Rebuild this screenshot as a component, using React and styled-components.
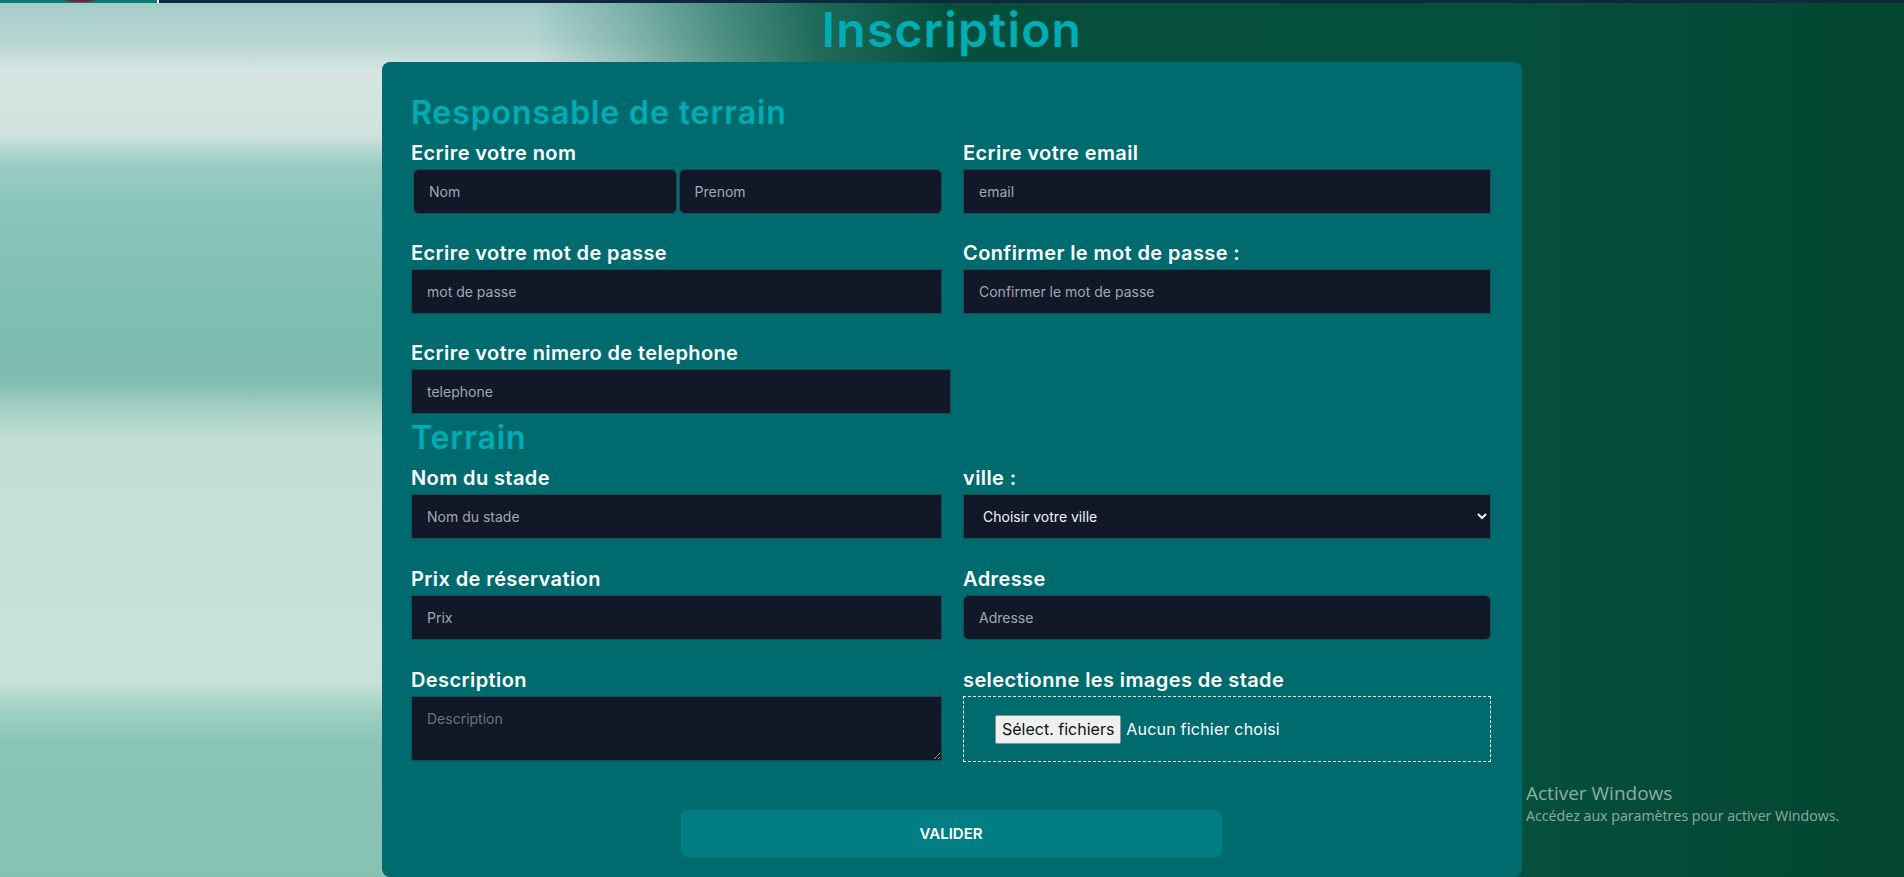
import React from "react";
import styled, { createGlobalStyle } from "styled-components";

const GlobalStyle = createGlobalStyle`
  html, body { margin: 0; padding: 0; }
  body {
    font-family: "Inter", "Liberation Sans", sans-serif;
    overflow: hidden;
  }
  * { box-sizing: border-box; }
`;

const Page = styled.div`
  position: relative;
  height: 877px;
  overflow: hidden;
  display: flex;
  flex-direction: column;
  background:
    linear-gradient(90deg,
      rgba(3, 72, 54, 0) 0%,
      rgba(3, 72, 54, 0) 28%,
      rgba(20, 110, 90, 0.3) 33%,
      rgba(12, 100, 80, 0.62) 38%,
      rgba(6, 88, 68, 0.86) 43%,
      #044e3b 50%,
      #054f3d 80%,
      #03462f 100%),
    linear-gradient(180deg,
      #a3ccc7 0px,
      #b5d5d1 40px,
      #d6e5e2 72px,
      #cfe2de 135px,
      #9ccbc3 165px,
      #8bc5bb 200px,
      #7fbfb2 300px,
      #7ebdb0 380px,
      #a8d2c6 412px,
      #c3dfd6 440px,
      #c8e2d9 680px,
      #9fcfc2 712px,
      #8ac4b5 742px,
      #86c1b2 877px);
`;

const TopBar = styled.div`
  display: flex;
  height: 3px;
  flex: none;
  overflow: hidden;
`;

const LogoZone = styled.div`
  width: 157px;
  background: #0b7b78;
  display: flex;
`;

const BarDivider = styled.div`
  width: 2px;
  background: #ffffff;
`;

const BarRest = styled.div`
  flex: 1;
  background: #10283b;
`;

const Title = styled.h1`
  margin: 3px 0 8px;
  font-size: 48px;
  line-height: 48px;
  font-weight: 600;
  text-align: center;
  color: #00adb5;
  letter-spacing: 1.2px;
`;

const Card = styled.div`
  width: 1140px;
  margin: 0 auto;
  background: #006b6f;
  border-radius: 8px;
  padding: 31px 31px 20px 29px;
`;

const SectionTitle = styled.h2`
  margin: 0 0 4px;
  font-size: 32px;
  line-height: 40px;
  font-weight: 600;
  color: #00adb5;
  letter-spacing: 0.9px;
`;

const FieldGrid = styled.div`
  display: grid;
  grid-template-columns: 531px 528px;
  column-gap: 21px;
  row-gap: ${(p) => p.$rowGap || "23px"};
  margin-bottom: 4px;
`;

const Field = styled.div`
  display: flex;
  flex-direction: column;
  grid-column: ${(p) => (p.$full ? "1 / -1" : "auto")};
`;

const Label = styled.label`
  font-size: 20px;
  line-height: 32px;
  font-weight: 600;
  color: #ffffff;
  white-space: nowrap;
  letter-spacing: 0.4px;
`;

const NameRow = styled.div`
  display: flex;
  gap: 2px;
  padding-left: 2px;
`;

const TextInput = styled.input`
  width: ${(p) => p.$width || "100%"};
  min-width: 0;
  flex: ${(p) => (p.$grow ? "1" : "none")};
  height: 45px;
  padding: 0 15px;
  background: #111827;
  border: 1px solid #1f4a55;
  border-radius: ${(p) => (p.$rounded ? "6px" : "0")};
  color: #e5e7eb;
  font-family: inherit;
  font-size: 14px;
  outline: none;
  &::placeholder { color: #a3a8b1; }
`;

const Select = styled.select`
  width: 100%;
  height: 45px;
  padding: 0 11px 0 15px;
  background: #111827;
  border: 1px solid #1f4a55;
  border-radius: 0;
  color: #f3f4f6;
  font-family: inherit;
  font-size: 14px;
  outline: none;
`;

const TextArea = styled.textarea`
  width: 100%;
  height: 65px;
  padding: 13px 15px;
  background: #111827;
  border: 1px solid #1f4a55;
  color: #e5e7eb;
  font-family: inherit;
  font-size: 14px;
  outline: none;
  &::placeholder { color: #6b7280; }
`;

const FileBox = styled.div`
  height: 66px;
  border: 1px dashed #ffffff;
  display: flex;
  align-items: center;
  gap: 5px;
  padding-left: 31px;
`;

const FileButton = styled.button`
  height: 29px;
  padding: 0 6px;
  background: #efefef;
  border: 1px solid #8f8f8f;
  border-radius: 2px;
  color: #111;
  font-family: inherit;
  font-size: 16px;
  font-weight: 400;
`;

const FileStatus = styled.span`
  color: #ffffff;
  font-size: 16px;
  letter-spacing: 0.2px;
`;

const SubmitButton = styled.button`
  display: block;
  width: 541px;
  height: 47px;
  margin: 48px auto 0;
  background: #007e84;
  border: none;
  border-radius: 6px;
  color: #ffffff;
  font-family: inherit;
  font-size: 15px;
  font-weight: 600;
`;

const Watermark = styled.div`
  position: absolute;
  left: 1526px;
  top: 780px;
  color: rgba(255, 255, 255, 0.55);
  font-family: "Open Sans", "Noto Sans", sans-serif;
`;

const WatermarkTitle = styled.div`
  font-size: 19px;
  line-height: 26px;
`;

const WatermarkText = styled.div`
  font-size: 14.2px;
  line-height: 20px;
`;

export default function App() {
  return (
    <Page>
      <GlobalStyle />
      <TopBar>
        <LogoZone>
          <svg width="157" height="3" viewBox="0 0 157 3">
            <ellipse cx="80" cy="-8" rx="26" ry="10" fill="#8a1526" />
          </svg>
        </LogoZone>
        <BarDivider />
        <BarRest />
      </TopBar>

      <Title>Inscription</Title>

      <Card>
        <SectionTitle>Responsable de terrain</SectionTitle>
        <FieldGrid>
          <Field>
            <Label>Ecrire votre nom</Label>
            <NameRow>
              <TextInput $rounded $grow placeholder="Nom" />
              <TextInput $rounded $grow placeholder="Prenom" />
            </NameRow>
          </Field>
          <Field>
            <Label>Ecrire votre email</Label>
            <TextInput placeholder="email" />
          </Field>
          <Field>
            <Label>Ecrire votre mot de passe</Label>
            <TextInput type="password" placeholder="mot de passe" />
          </Field>
          <Field>
            <Label>Confirmer le mot de passe :</Label>
            <TextInput type="password" placeholder="Confirmer le mot de passe" />
          </Field>
          <Field $full>
            <Label>Ecrire votre nimero de telephone</Label>
            <TextInput $width="540px" placeholder="telephone" />
          </Field>
        </FieldGrid>

        <SectionTitle>Terrain</SectionTitle>
        <FieldGrid $rowGap="24px">
          <Field>
            <Label>Nom du stade</Label>
            <TextInput placeholder="Nom du stade" />
          </Field>
          <Field>
            <Label>ville :</Label>
            <Select defaultValue="">
              <option value="">Choisir votre ville</option>
              <option value="casa">Casablanca</option>
              <option value="rabat">Rabat</option>
            </Select>
          </Field>
          <Field>
            <Label>Prix de réservation</Label>
            <TextInput placeholder="Prix" />
          </Field>
          <Field>
            <Label>Adresse</Label>
            <TextInput $rounded placeholder="Adresse" />
          </Field>
          <Field>
            <Label>Description</Label>
            <TextArea placeholder="Description" />
          </Field>
          <Field>
            <Label>selectionne les images de stade</Label>
            <FileBox>
              <FileButton type="button">Sélect. fichiers</FileButton>
              <FileStatus>Aucun fichier choisi</FileStatus>
            </FileBox>
          </Field>
        </FieldGrid>

        <SubmitButton type="button">VALIDER</SubmitButton>
      </Card>

      <Watermark>
        <WatermarkTitle>Activer Windows</WatermarkTitle>
        <WatermarkText>Accédez aux paramètres pour activer Windows.</WatermarkText>
      </Watermark>
    </Page>
  );
}
